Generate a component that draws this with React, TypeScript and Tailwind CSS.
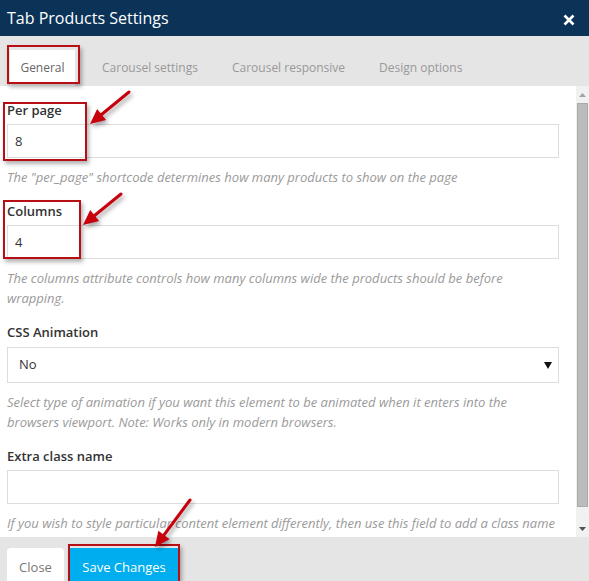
import React from 'react';

const HelpText: React.FC<{ children: React.ReactNode; className?: string }> = ({ children, className = '' }) => (
  <p className={`text-[13px] leading-[20px] italic text-[#9a9a9a] ${className}`}>{children}</p>
);

const Label: React.FC<{ children: React.ReactNode; className?: string }> = ({ children, className = '' }) => (
  <div className={`text-[13px] leading-[18px] font-semibold text-[#333] ${className}`}>{children}</div>
);

type Pt = [number, number];

const Arrow: React.FC<{ tail: Pt; tip: Pt }> = ({ tail, tip }) => {
  const dx = tip[0] - tail[0];
  const dy = tip[1] - tail[1];
  const len = Math.hypot(dx, dy);
  const ux = dx / len;
  const uy = dy / len;
  const headLen = 15;
  const half = 7;
  const bx = tip[0] - ux * headLen;
  const by = tip[1] - uy * headLen;
  const px = -uy * half;
  const py = ux * half;
  const points = `${tip[0]},${tip[1]} ${bx + px},${by + py} ${bx - px},${by - py}`;
  return (
    <g>
      <line x1={tail[0]} y1={tail[1]} x2={bx + ux * 2} y2={by + uy * 2} stroke="#c8000c" strokeWidth={3} strokeLinecap="round" />
      <polygon points={points} fill="#c8000c" />
    </g>
  );
};

const App: React.FC = () => {
  return (
    <div className="relative w-[589px] h-[581px] overflow-hidden bg-white font-['Open_Sans',sans-serif]">
      {/* header */}
      <div className="h-[36px] bg-[#0b3358] flex items-center justify-between pl-[7px] pr-[14px]">
        <h1 className="text-[16px] text-white leading-none">Tab Products Settings</h1>
        <svg width="12" height="12" viewBox="0 0 12 12" className="mt-[3px]">
          <path d="M1.5 1.5 L10.5 10.5 M10.5 1.5 L1.5 10.5" stroke="white" strokeWidth="2.6" />
        </svg>
      </div>

      {/* tabs */}
      <div className="h-[50px] bg-[#e5e5e5] flex items-end pl-[10px] text-[12px]">
        <div className="w-[65px] h-[36px] bg-white flex items-center justify-center text-[#666]">General</div>
        <div className="ml-[10px] h-[36px] px-[17px] flex items-center text-[#999]">Carousel settings</div>
        <div className="h-[36px] px-[17px] flex items-center text-[#999]">Carousel responsive</div>
        <div className="h-[36px] px-[17px] flex items-center text-[#999]">Design options</div>
      </div>

      {/* body */}
      <div className="flex h-[451px]">
        <div className="w-[576px] overflow-hidden pl-[7px] pr-[17px] pt-[15px]">
          <Label>Per page</Label>
          <input
            readOnly
            value="8"
            className="mt-[5px] w-full h-[34px] border border-[#ddd] px-[7px] text-[13px] text-[#333] outline-none"
          />
          <HelpText className="mt-[9px]">The "per_page" shortcode determines how many products to show on the page</HelpText>

          <Label className="mt-[15px]">Columns</Label>
          <input
            readOnly
            value="4"
            className="mt-[5px] w-full h-[34px] border border-[#ddd] px-[7px] text-[13px] text-[#333] outline-none"
          />
          <HelpText className="mt-[9px]">
            The columns attribute controls how many columns wide the products should be before wrapping.
          </HelpText>

          <Label className="mt-[15px]">CSS Animation</Label>
          <div className="mt-[6px] h-[36px] border border-[#ddd] flex items-center justify-between pl-[11px] pr-[6px] text-[13px] text-[#333]">
            <span>No</span>
            <svg width="8" height="7" viewBox="0 0 8 7">
              <polygon points="0,0 8,0 4,7" fill="#111" />
            </svg>
          </div>
          <HelpText className="mt-[9px]">
            Select type of animation if you want this element to be animated when it enters into the browsers viewport. Note: Works only in modern browsers.
          </HelpText>

          <Label className="mt-[15px]">Extra class name</Label>
          <input
            readOnly
            value=""
            className="mt-[5px] w-full h-[34px] border border-[#ddd] px-[7px] text-[13px] text-[#333] outline-none"
          />
          <HelpText className="mt-[9px]">
            If you wish to style particular content element differently, then use this field to add a class name
          </HelpText>
        </div>

        {/* scrollbar */}
        <div className="w-[13px] bg-[#f1f1f1] flex flex-col items-center">
          <div className="h-[17px] flex items-center justify-center">
            <svg width="7" height="4" viewBox="0 0 7 4">
              <polygon points="0,4 7,4 3.5,0" fill="#a3a3a3" />
            </svg>
          </div>
          <div className="w-[11px] h-[404px] bg-[#bcbcbc] border border-[#aaa]" />
          <div className="flex-1" />
          <div className="h-[17px] flex items-center justify-center">
            <svg width="7" height="4" viewBox="0 0 7 4">
              <polygon points="0,0 7,0 3.5,4" fill="#505050" />
            </svg>
          </div>
        </div>
      </div>

      {/* footer */}
      <div className="h-[44px] bg-[#e5e5e5] flex items-end pl-[7px] gap-[6px] text-[13px]">
        <button className="w-[57px] h-[33px] bg-white rounded-t-[4px] text-[#777] pt-[6px]">Close</button>
        <button className="w-[108px] h-[33px] bg-[#00aeef] text-white pt-[6px]">Save Changes</button>
      </div>

      {/* annotation boxes */}
      <div className="absolute left-[7px] top-[45px] w-[73px] h-[39px] border-2 border-[#b80e16] shadow-[2px_3px_4px_rgba(0,0,0,0.3)]" />
      <div className="absolute left-[3px] top-[102px] w-[84px] h-[59px] border-2 border-[#b80e16] shadow-[2px_3px_4px_rgba(0,0,0,0.3)]" />
      <div className="absolute left-[3px] top-[200px] w-[78px] h-[59px] border-2 border-[#b80e16] shadow-[2px_3px_4px_rgba(0,0,0,0.3)]" />
      <div className="absolute left-[68px] top-[544px] w-[112px] h-[44px] border-2 border-[#b80e16] shadow-[2px_3px_4px_rgba(0,0,0,0.3)]" />

      {/* annotation arrows */}
      <svg
        className="absolute left-0 top-0 pointer-events-none drop-shadow-[2px_3px_2px_rgba(0,0,0,0.35)]"
        width="589"
        height="581"
      >
        <Arrow tail={[129, 92]} tip={[90, 124]} />
        <Arrow tail={[121, 194]} tip={[83, 225]} />
        <Arrow tail={[190, 500]} tip={[155, 547]} />
      </svg>
    </div>
  );
};

export default App;
